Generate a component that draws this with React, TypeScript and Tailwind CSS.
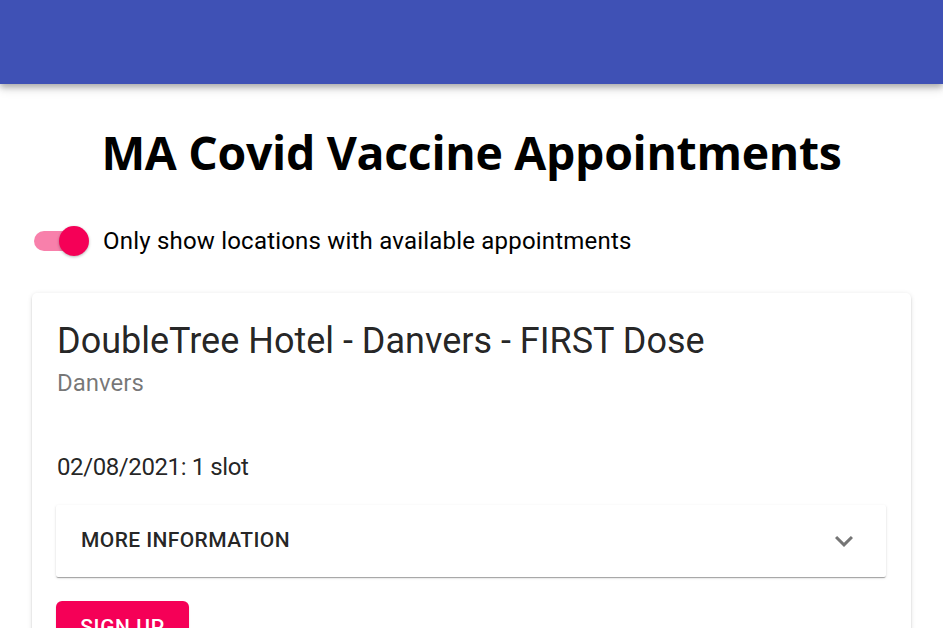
export default function App() {
  return (
    <div className="min-h-screen bg-white font-['Roboto',sans-serif] text-[rgba(0,0,0,0.87)]">
      {/* App bar */}
      <header className="h-[84px] bg-[#3f51b5] shadow-[0_3px_6px_rgba(0,0,0,0.25),0_5px_10px_rgba(0,0,0,0.12)]" />

      <main className="px-[32px]">
        <h1 className="mt-[36px] text-center font-['Open_Sans',sans-serif] text-[46.4px] font-bold leading-[64px] tracking-[-0.3px] text-black">
          MA Covid Vaccine Appointments
        </h1>

        {/* Switch */}
        <div className="mt-[39px] flex h-[36px] items-center">
          <div className="relative ml-[2px] h-[20px] w-[56px]">
            <div className="absolute left-0 top-0 h-[20px] w-[50px] rounded-full bg-[#f880ab]" />
            <div className="absolute left-[25px] top-[-5px] h-[30px] w-[30px] rounded-full bg-[#f50057] shadow-[0_1px_3px_rgba(0,0,0,0.3)]" />
          </div>
          <span className="ml-[13px] text-[24px] tracking-[0.2px] text-black">Only show locations with available appointments</span>
        </div>

        {/* Card */}
        <div className="mt-[34px] rounded-[5px] bg-white px-[25px] pb-[20px] pt-[24px] shadow-[0_2px_2px_rgba(0,0,0,0.14),0_1px_5px_rgba(0,0,0,0.12),0_3px_1px_-2px_rgba(0,0,0,0.1)]">
          <h2 className="text-[36px] leading-[48px] text-[rgba(0,0,0,0.87)]">DoubleTree Hotel - Danvers - FIRST Dose</h2>
          <p className="text-[24px] leading-[36px] text-[rgba(0,0,0,0.54)]">Danvers</p>

          <p className="mt-[48px] text-[24px] leading-[36px] tracking-[-0.4px] text-[rgba(0,0,0,0.87)]">02/08/2021: 1 slot</p>

          {/* Accordion */}
          <div className="mt-[20px] ml-[-1px] flex h-[72px] items-center justify-between rounded-[2px] bg-white pl-[25px] pr-[24px] shadow-[0_2px_1px_-1px_rgba(0,0,0,0.2),0_1px_1px_rgba(0,0,0,0.14),0_1px_3px_rgba(0,0,0,0.12)]">
            <span className="text-[21px] font-medium tracking-[0.4px] text-[rgba(0,0,0,0.87)]">MORE INFORMATION</span>
            <svg width="36" height="36" viewBox="0 0 24 24" fill="#757575">
              <path d="M16.59 8.59L12 13.17 7.41 8.59 6 10l6 6 6-6z" />
            </svg>
          </div>

          <button className="mt-[24px] ml-[-1px] flex h-[54px] w-[133px] items-center justify-center rounded-[6px] bg-[#f50057] text-[21px] font-medium tracking-[0.6px] text-white shadow-[0_3px_1px_-2px_rgba(0,0,0,0.2),0_2px_2px_rgba(0,0,0,0.14)]">
            SIGN UP
          </button>
        </div>
      </main>
    </div>
  );
}
